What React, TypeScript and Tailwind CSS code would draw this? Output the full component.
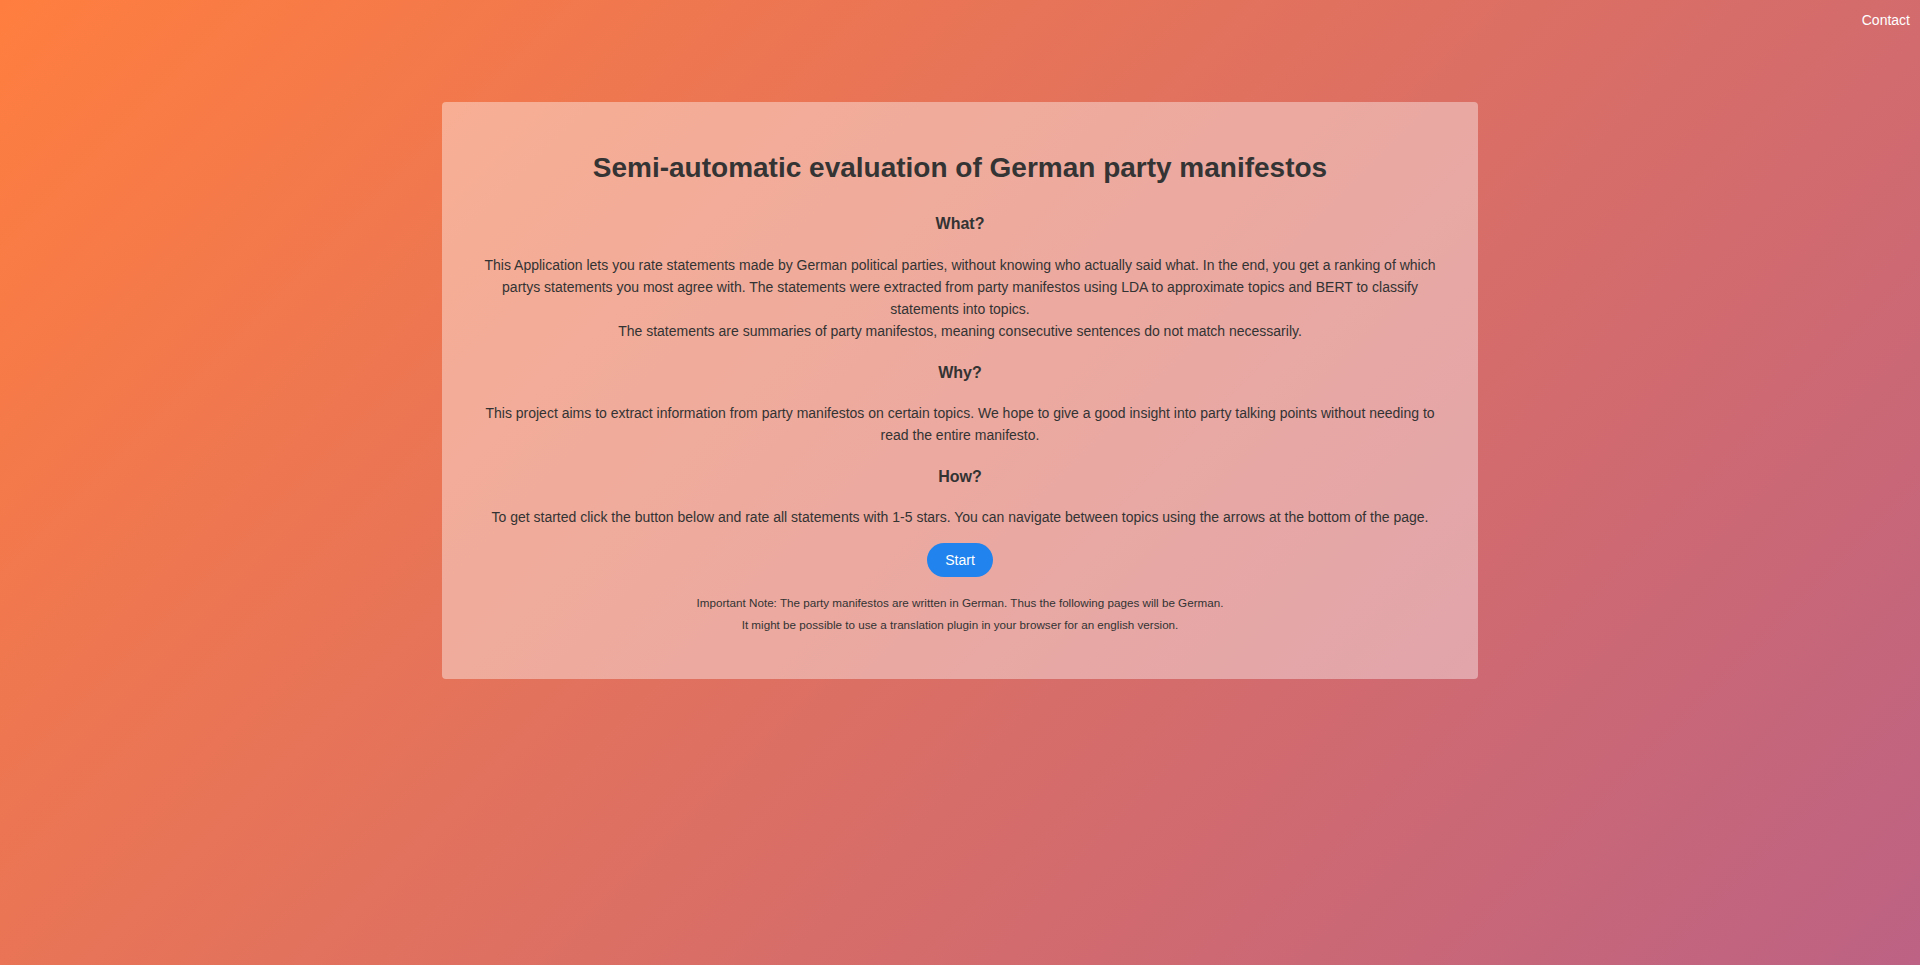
export default function App() {
  return (
    <div
      className="min-h-screen w-full bg-linear-[135deg,#ff7e3f,#bd6284] text-[#333] font-['Liberation_Sans',Arial,sans-serif]"
    >
      {/* top nav */}
      <nav className="h-10 flex items-center justify-end px-[10px]">
        <a href="#" className="text-white text-[14px] leading-5">
          Contact
        </a>
      </nav>

      {/* intro card */}
      <main className="mt-[62px] mx-auto w-[1036px] bg-white/40 rounded-[4px] px-10 pt-[49px] pb-[43px] text-center">
        <h1 className="text-[28px] leading-[34px] font-bold text-[#343434]">
          Semi-automatic evaluation of German party manifestos
        </h1>

        <h2 className="mt-[29px] text-[16px] leading-[19px] font-bold">What?</h2>
        <p className="mt-[21px] text-[14px] leading-[22px]">
          This Application lets you rate statements made by German political parties, without knowing who actually
          said what. In the end, you get a ranking of which partys statements you most agree with. The statements were
          extracted from party manifestos using LDA to approximate topics and BERT to classify statements into topics.
          <br />
          The statements are summaries of party manifestos, meaning consecutive sentences do not match necessarily.
        </p>

        <h2 className="mt-[21px] text-[16px] leading-[19px] font-bold">Why?</h2>
        <p className="mt-[20px] text-[14px] leading-[22px]">
          This project aims to extract information from party manifestos on certain topics. We hope to give a good
          insight into party talking points without needing to read the entire manifesto.
        </p>

        <h2 className="mt-[21px] text-[16px] leading-[19px] font-bold">How?</h2>
        <p className="mt-[20px] text-[14px] leading-[22px]">
          To get started click the button below and rate all statements with 1-5 stars. You can navigate between topics
          using the arrows at the bottom of the page.
        </p>

        <div className="mt-[15px] flex justify-center">
          <button className="h-[34px] px-[18px] rounded-full bg-[#2183ed] text-white text-[14px] leading-5">
            Start
          </button>
        </div>

        {/* notes about language */}
        <div className="mt-[15px] text-[11.67px] leading-[22px]">
          <p>Important Note: The party manifestos are written in German. Thus the following pages will be German.</p>
          <p>It might be possible to use a translation plugin in your browser for an english version.</p>
        </div>
      </main>
    </div>
  );
}
